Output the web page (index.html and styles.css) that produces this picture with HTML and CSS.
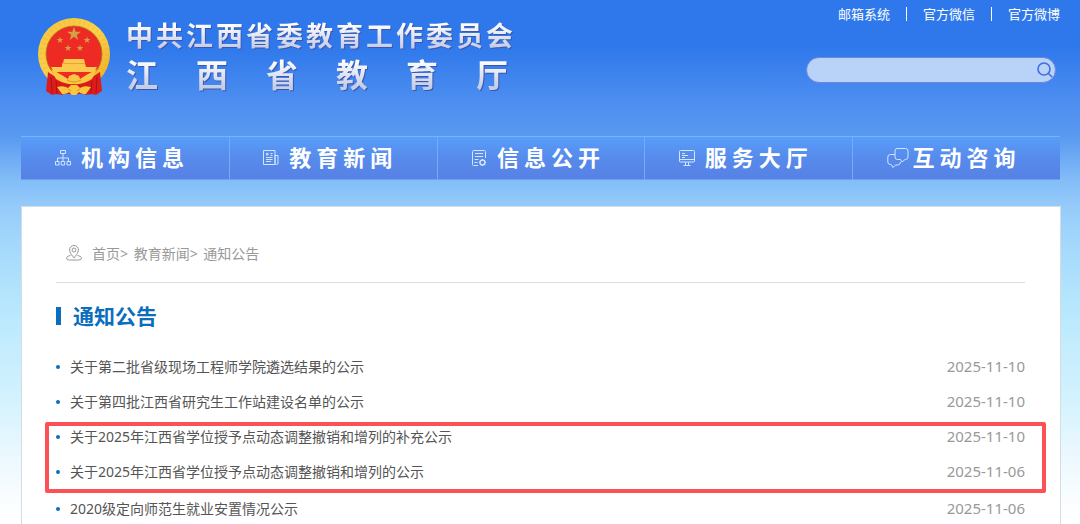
FILE: index.html
```html
<!DOCTYPE html>
<html lang="zh-CN">
<head>
<meta charset="utf-8">
<meta name="viewport" content="width=device-width, initial-scale=1">
<title>通知公告</title>
<link rel="stylesheet" href="styles.css">
</head>
<body>
<header class="header">
  <div class="brand">
    <svg class="emblem" viewBox="0 0 74 80" aria-hidden="true">
      <defs>
        <linearGradient id="gold" x1="0" y1="0" x2="1" y2="1">
          <stop offset="0" stop-color="#f6c33c"/>
          <stop offset=".5" stop-color="#fbd24a"/>
          <stop offset="1" stop-color="#eea91f"/>
        </linearGradient>
        <path id="star" d="M0-10 2.3-3.1 9.5-3.1 3.7 1.2 5.9 8.1 0 3.9-5.9 8.1-3.7 1.2-9.5-3.1-2.3-3.1z"/>
      </defs>
      <circle cx="37" cy="37" r="36" fill="url(#gold)"/>
      <circle cx="37" cy="37" r="32" fill="none" stroke="#e5a62a" stroke-width="5" stroke-dasharray="2 3" opacity=".2"/>
      <circle cx="37" cy="37" r="28" fill="#ee2a24" stroke="#ba7420"/>
      <g fill="#d4a044">
        <use href="#star" transform="translate(37 17) scale(.73)"/>
        <use href="#star" transform="translate(23 23) scale(.36)"/>
        <use href="#star" transform="translate(50 23) scale(.36)"/>
        <use href="#star" transform="translate(31 31) scale(.36)"/>
        <use href="#star" transform="translate(43 31) scale(.36)"/>
      </g>
      <path d="M27 42h20l1 4H26zM25 46h23l1 4H25zM14 50h46l-3 5H17z" fill="#fcc94c"/>
      <path d="M25 46.500h23" stroke="#dd8a2c" stroke-width=".6"/>
      <path d="M11 55q6 4 11 7l4 16-7-1-4 1-6-4zM63 55q-6 4-11 7l-4 16 7-1 4 1 6-4z" fill="#dc1d1c"/>
      <path d="M20 64h34l-3 13H23z" fill="#d91b1b"/>
      <path d="M14 60l1 16M60 60l-1 16M19 64l1 13M55 64l-1 13" stroke="#ac1219" fill="none"/>
      <path d="M14 52q11 6 17 10l1-3 5-2 5 2 1 3q6-4 17-10l-5 10q-9 6-18 5-9 1-18-5z" fill="#fbc843"/>
      <path d="M20 70q7-2 11 1l3-3h6l3 3q4-3 11-1l-5 7q-5 0-7-2l-3 3h-4l-3-3q-2 2-7 2z" fill="#f9c63c"/>
      <path d="M30 63q7 4 14 0M31 72l3 2m9-2-3 2" stroke="#d79520" fill="none"/>
    </svg>
    <h1 class="brand-name">
      <span class="brand-committee">中共江西省委教育工作委员会</span>
      <span class="brand-dept">江西省教育厅</span>
    </h1>
  </div>
  <div class="tools">
    <nav class="links" aria-label="快捷链接">
      <a href="#">邮箱系统</a><a href="#">官方微信</a><a href="#">官方微博</a>
    </nav>
    <form class="search" role="search">
      <input class="search-input" type="search" aria-label="搜索">
      <button class="search-button" type="submit" aria-label="提交搜索">
        <svg width="16" height="16" viewBox="0 0 16 16" fill="none" stroke="#416de3" stroke-width="1.6"><circle cx="7" cy="7" r="6"/><path d="M11.2 11.2 15 15"/></svg>
      </button>
    </form>
  </div>
</header>

<nav class="main-nav" aria-label="主导航">
  <a href="#">
    <svg width="16" height="18" viewBox="0 0 16 18" class="icon"><path d="M5.500 1.500h5v3h-5zM8 4.500v8M2.500 12.500v-3.500h11v3.500M.5 12.500h3.500v3.500H.5zM6.200 12.500h3.500v3.500H6.200zM12 12.500h3.500v3.500H12z"/></svg>
    <span>机构信息</span>
  </a>
  <a href="#">
    <svg width="16" height="18" viewBox="0 0 16 18" class="icon"><path d="M.5 1.500h11.500v14H.5zM12 6.500h3v7.500q0 1.500-1.500 1.500T12 14zM7.500 4.500h2M7.500 6.500h2M3 8.500h6.500M3 10.500h6.500M3 12.500h5"/><path d="M3.500 4.500h1.500v1.500H3.500z"/></svg>
    <span>教育新闻</span>
  </a>
  <a href="#">
    <svg width="16" height="18" viewBox="0 0 16 18" class="icon"><path d="M7 16.500H2.500q-1 0-1-1v-13q0-1 1-1h11q1 0 1 1V9M4 4.500h8M4 7.500h8M3.500 10.500h4M3.500 13.500h3"/><circle cx="11.500" cy="13.500" r="2.500" stroke-width="1.400"/><path d="M11.500 11V10M11.500 17v-1M8 13.500h1M14 13.500h1"/></svg>
    <span>信息公开</span>
  </a>
  <a href="#">
    <svg width="16" height="18" viewBox="0 0 16 18" class="icon"><rect x=".5" y="1.500" width="15" height="11.500" rx="1"/><path d="M.5 10.500h15M3 4.500h3M3 6.500h6M3 8.500h3M6.500 13v3M9.500 13v3M4.500 16.500h7"/></svg>
    <span>服务大厅</span>
  </a>
  <a href="#" class="wide-icon">
    <svg width="22" height="22" viewBox="0 0 22 22" class="icon"><path d="M10 1.500h8.500q2.500 0 2.500 2.500v6q0 2.500-2.500 2.500H18l-3 2.500-1.500-2.500H10.500Q8 12.500 8 10V4q0-2.500 2-2.500z"/><path d="M8 7.500H3.500Q.8 7.500.8 10v5q0 2.500 2.500 2.500h1l1.500 3 3-2.500h2q2.500-.3 2.800-3"/></svg>
    <span>互动咨询</span>
  </a>
</nav>

<main class="panel">
  <nav class="crumbs" aria-label="当前位置">
    <svg width="16" height="18" viewBox="0 0 16 18" fill="none" stroke="#999"><path d="M8 14Q3.500 9 3.500 6a4.500 4.500 0 0 1 9 0Q12.500 9 8 14z"/><circle cx="8" cy="6" r="2"/><path d="M4.500 11.500Q.5 12 .5 14q0 2 3 2h9q3 0 3-2t-4-2.500"/></svg>
    <span><a href="#">首页</a>&gt; <a href="#">教育新闻</a>&gt; <a href="#">通知公告</a></span>
  </nav>
  <h2 class="section-title">通知公告</h2>
  <div class="notices">
    <ul class="notice-list">
      <li><a href="#">关于第二批省级现场工程师学院遴选结果的公示</a><time>2025-11-10</time></li>
      <li><a href="#">关于第四批江西省研究生工作站建设名单的公示</a><time>2025-11-10</time></li>
      <li><a href="#">关于2025年江西省学位授予点动态调整撤销和增列的补充公示</a><time>2025-11-10</time></li>
      <li><a href="#">关于2025年江西省学位授予点动态调整撤销和增列的公示</a><time>2025-11-06</time></li>
      <li><a href="#">2020级定向师范生就业安置情况公示</a><time>2025-11-06</time></li>
    </ul>
    <div class="highlight"></div>
  </div>
</main>
</body>
</html>
```
FILE: styles.css
```css
* {
  box-sizing: border-box;
}

body {
  margin: 0;
  padding: 0 20px 0 21px;
  font-family: "Noto Sans", "Noto Sans CJK SC", sans-serif;
  font-size: 14px;
  background: linear-gradient(#2e78eb 0, #2e78eb 45px, #4c8df0 100px, #5999f0 136px, #82bdf7 180px, #95cbfa 206px, #a6dafc 250px, #b5e6fd 300px, #c5edfe 350px, #d3f2fe 400px, #e9f8fe 450px, #fff 515px) #fff no-repeat;
}

a {
  color: inherit;
  text-decoration: none;
}

.header {
  display: flex;
  justify-content: space-between;
  height: 136px;
}

.brand {
  display: flex;
  align-items: flex-start;
  gap: 15px;
  padding: 17px 0 0 16px;
}

.emblem {
  width: 74px;
  height: 80px;
}

.brand-name {
  display: flex;
  flex-direction: column;
  margin: 0;
  font-weight: 700;
  font-family: "Noto Sans CJK SC", sans-serif;
  white-space: nowrap;
  filter: drop-shadow(1px 1px 0 #3d56ac);
}

.brand-name span {
  color: transparent;
  background-image: linear-gradient(#fff 20%, #c5cce6 85%);
  background-clip: text;
  -webkit-background-clip: text;
}

.brand-committee {
  font-size: 27px;
  line-height: 36px;
  letter-spacing: 3px;
}

.brand-dept {
  font-size: 32px;
  line-height: 40px;
  letter-spacing: 38px;
}

.tools {
  display: flex;
  flex-direction: column;
  align-items: flex-end;
  gap: 33px;
  padding-top: 4px;
}

.links {
  display: flex;
  color: #fff;
  font-size: 13px;
  line-height: 20px;
}

.links a {
  display: flex;
  align-items: center;
}

.links a + a::before {
  content: "";
  width: 1px;
  height: 14px;
  margin: 0 16px;
  background: #fff;
}

.search {
  display: flex;
  align-items: center;
  width: 250px;
  height: 26px;
  margin-right: 4px;
  border: 1px solid #6f86dc;
  border-radius: 13px;
  background: #b9d2f8;
}

.search-input {
  flex: 1;
  min-width: 0;
  height: 22px;
  padding: 0 12px;
  border: 0;
  outline: 0;
  background: transparent;
}

.search-button {
  display: flex;
  padding: 0 2px;
  border: 0;
  background: transparent;
}

.main-nav {
  display: grid;
  grid-template-columns: repeat(5, 1fr);
  height: 44px;
  border-top: 1px solid #6fb6fb;
  border-bottom: 1px solid #6d9ff0;
  background: linear-gradient(#589df9, #568bec 50%, #5781e4);
}

.main-nav a {
  display: flex;
  align-items: center;
  justify-content: center;
  gap: 10px;
  padding-right: 6px;
  color: #fff;
  font-size: 22px;
  font-weight: 700;
  line-height: 32px;
  letter-spacing: 5px;
}

.main-nav span {
  padding-bottom: 2px;
}

.main-nav a + a {
  border-left: 1px solid #77abf3;
}

.main-nav .wide-icon {
  gap: 4px;
}

.icon {
  fill: none;
  stroke: #d5e5fd;
  stroke-width: 1;
}

.panel {
  margin: 26px -1px 0 0;
  padding: 29px 35px 0 34px;
  border: 1px solid #d4dde6;
  border-bottom: 0;
  background: #fff;
}

.crumbs {
  display: flex;
  align-items: center;
  gap: 10px;
  height: 47px;
  padding: 0 10px 12px;
  color: #999;
  border-bottom: 1px solid #ddd;
}

.crumbs a + a {
  margin-left: 2px;
}

.section-title {
  display: flex;
  align-items: center;
  gap: 12px;
  margin: 18px 0;
  color: #0a6ebd;
  font-size: 21px;
  line-height: 30px;
}

.section-title::before {
  content: "";
  width: 5px;
  height: 18px;
  background: #0a6ebd;
}

.notices {
  position: relative;
}

.notice-list {
  margin: 0;
  padding: 0;
  list-style: none;
}

.notice-list li {
  display: flex;
  align-items: center;
  height: 35px;
  color: #555;
}

.notice-list li:nth-child(4) {
  margin-bottom: 2px;
}

.notice-list li::before {
  content: "";
  width: 4px;
  height: 4px;
  margin-right: 10px;
  border-radius: 50%;
  background: #0a6ebd;
}

.notice-list a,
.notice-list time {
  padding-bottom: 2px;
}

.notice-list time {
  margin-left: auto;
  color: #999;
  font-size: 15px;
}

.highlight {
  position: absolute;
  top: 73px;
  left: -11px;
  right: -21px;
  height: 71px;
  border: 4px solid #fd5255;
  border-radius: 2px;
  pointer-events: none;
}
```
